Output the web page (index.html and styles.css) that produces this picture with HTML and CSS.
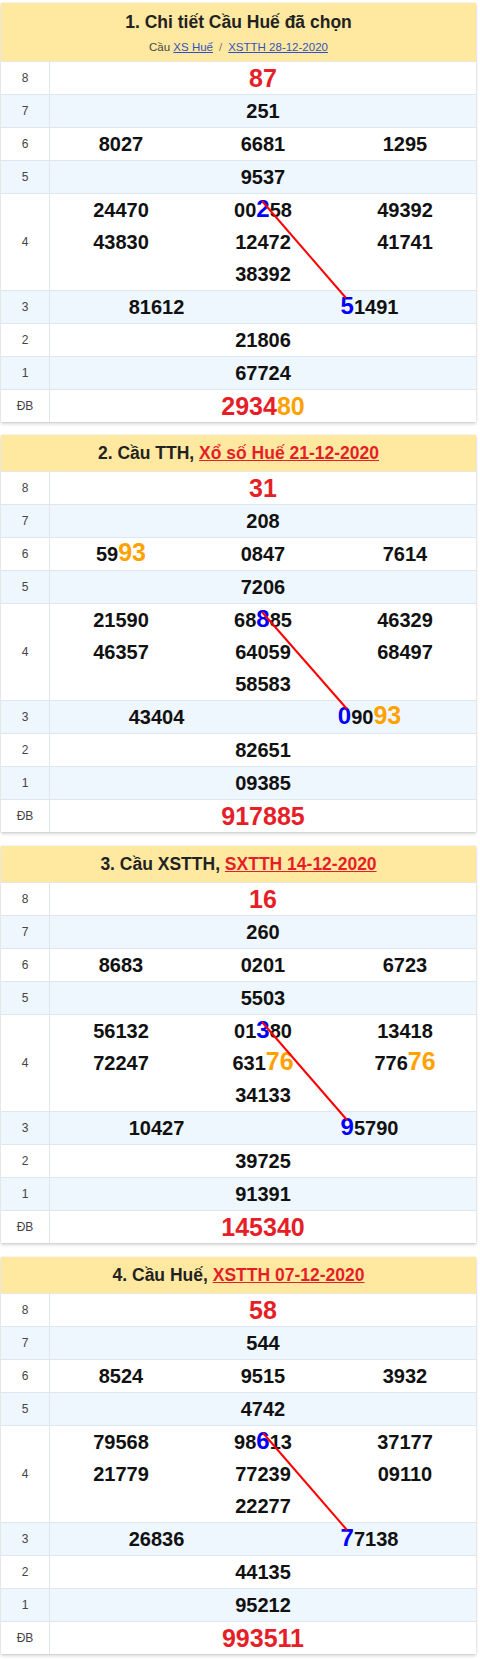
FILE: index.html
```html
<!DOCTYPE html>
<html lang="vi">
<head>
<meta charset="utf-8">
<title>Cầu Huế</title>
<link rel="stylesheet" href="styles.css">
</head>
<body>
<main class="page">

<section class="card">
  <div class="card-head head-two">
    <h2 class="card-title">1. Chi tiết Cầu Huế đã chọn</h2>
    <p class="card-sub">Cầu <a href="#">XS Huế</a><span class="sep">/</span><a href="#">XSTTH 28-12-2020</a></p>
  </div>
  <div class="results">
    <svg class="bridge" width="475" height="360" viewBox="0 0 475 360"><line x1="261" y1="139" x2="345" y2="236"/></svg>
    <div class="row"><div class="lbl">8</div><div class="nums c1"><span class="big red">87</span></div></div>
    <div class="row alt"><div class="lbl">7</div><div class="nums c1"><span>251</span></div></div>
    <div class="row"><div class="lbl">6</div><div class="nums c3"><span>8027</span><span>6681</span><span>1295</span></div></div>
    <div class="row alt"><div class="lbl">5</div><div class="nums c1"><span>9537</span></div></div>
    <div class="row r4"><div class="lbl">4</div><div class="nums c3"><span>24470</span><span>00<b class="hl">2</b>58</span><span>49392</span><span>43830</span><span>12472</span><span>41741</span><span class="mid">38392</span></div></div>
    <div class="row alt"><div class="lbl">3</div><div class="nums c2"><span>81612</span><span><b class="hl">5</b>1491</span></div></div>
    <div class="row"><div class="lbl">2</div><div class="nums c1"><span>21806</span></div></div>
    <div class="row alt"><div class="lbl">1</div><div class="nums c1"><span>67724</span></div></div>
    <div class="row"><div class="lbl">ĐB</div><div class="nums c1"><span class="big red">2934<b class="org">80</b></span></div></div>
  </div>
</section>

<section class="card">
  <div class="card-head">
    <h2 class="card-title">2. Cầu TTH, <a href="#">Xổ số Huế 21-12-2020</a></h2>
  </div>
  <div class="results">
    <svg class="bridge" width="475" height="360" viewBox="0 0 475 360"><line x1="261" y1="140" x2="346" y2="237"/></svg>
    <div class="row"><div class="lbl">8</div><div class="nums c1"><span class="big red">31</span></div></div>
    <div class="row alt"><div class="lbl">7</div><div class="nums c1"><span>208</span></div></div>
    <div class="row"><div class="lbl">6</div><div class="nums c3"><span>59<b class="org">93</b></span><span>0847</span><span>7614</span></div></div>
    <div class="row alt"><div class="lbl">5</div><div class="nums c1"><span>7206</span></div></div>
    <div class="row r4"><div class="lbl">4</div><div class="nums c3"><span>21590</span><span>68<b class="hl">8</b>85</span><span>46329</span><span>46357</span><span>64059</span><span>68497</span><span class="mid">58583</span></div></div>
    <div class="row alt"><div class="lbl">3</div><div class="nums c2"><span>43404</span><span><b class="hl">0</b>90<b class="org">93</b></span></div></div>
    <div class="row"><div class="lbl">2</div><div class="nums c1"><span>82651</span></div></div>
    <div class="row alt"><div class="lbl">1</div><div class="nums c1"><span>09385</span></div></div>
    <div class="row"><div class="lbl">ĐB</div><div class="nums c1"><span class="big red">917885</span></div></div>
  </div>
</section>

<section class="card">
  <div class="card-head">
    <h2 class="card-title">3. Cầu XSTTH, <a href="#">SXTTH 14-12-2020</a></h2>
  </div>
  <div class="results">
    <svg class="bridge" width="475" height="360" viewBox="0 0 475 360"><line x1="261" y1="139" x2="346" y2="237"/></svg>
    <div class="row"><div class="lbl">8</div><div class="nums c1"><span class="big red">16</span></div></div>
    <div class="row alt"><div class="lbl">7</div><div class="nums c1"><span>260</span></div></div>
    <div class="row"><div class="lbl">6</div><div class="nums c3"><span>8683</span><span>0201</span><span>6723</span></div></div>
    <div class="row alt"><div class="lbl">5</div><div class="nums c1"><span>5503</span></div></div>
    <div class="row r4"><div class="lbl">4</div><div class="nums c3"><span>56132</span><span>01<b class="hl">3</b>80</span><span>13418</span><span>72247</span><span>631<b class="org">76</b></span><span>776<b class="org">76</b></span><span class="mid">34133</span></div></div>
    <div class="row alt"><div class="lbl">3</div><div class="nums c2"><span>10427</span><span><b class="hl">9</b>5790</span></div></div>
    <div class="row"><div class="lbl">2</div><div class="nums c1"><span>39725</span></div></div>
    <div class="row alt"><div class="lbl">1</div><div class="nums c1"><span>91391</span></div></div>
    <div class="row"><div class="lbl">ĐB</div><div class="nums c1"><span class="big red">145340</span></div></div>
  </div>
</section>

<section class="card">
  <div class="card-head">
    <h2 class="card-title">4. Cầu Huế, <a href="#">XSTTH 07-12-2020</a></h2>
  </div>
  <div class="results">
    <svg class="bridge" width="475" height="360" viewBox="0 0 475 360"><line x1="262" y1="139" x2="346" y2="236"/></svg>
    <div class="row"><div class="lbl">8</div><div class="nums c1"><span class="big red">58</span></div></div>
    <div class="row alt"><div class="lbl">7</div><div class="nums c1"><span>544</span></div></div>
    <div class="row"><div class="lbl">6</div><div class="nums c3"><span>8524</span><span>9515</span><span>3932</span></div></div>
    <div class="row alt"><div class="lbl">5</div><div class="nums c1"><span>4742</span></div></div>
    <div class="row r4"><div class="lbl">4</div><div class="nums c3"><span>79568</span><span>98<b class="hl">6</b>13</span><span>37177</span><span>21779</span><span>77239</span><span>09110</span><span class="mid">22277</span></div></div>
    <div class="row alt"><div class="lbl">3</div><div class="nums c2"><span>26836</span><span><b class="hl">7</b>7138</span></div></div>
    <div class="row"><div class="lbl">2</div><div class="nums c1"><span>44135</span></div></div>
    <div class="row alt"><div class="lbl">1</div><div class="nums c1"><span>95212</span></div></div>
    <div class="row"><div class="lbl">ĐB</div><div class="nums c1"><span class="big red">993511</span></div></div>
  </div>
</section>

</main>
</body>
</html>
```

FILE: styles.css
```css
* { box-sizing: border-box; }

body {
  margin: 0;
  background: #ffffff;
  font-family: "Liberation Sans", Arial, sans-serif;
  color: #111111;
}

.page {
  padding: 3px 4px 0 1px;
}

.card {
  box-shadow: 0 0 1px rgba(0, 0, 0, 0.22), 0 2px 3px rgba(0, 0, 0, 0.16);
  margin-bottom: 14px;
  background: #ffffff;
}

.card:first-child {
  margin-bottom: 13px;
}

.card-head {
  background: #ffe9a1;
  text-align: center;
  padding: 7px 6px 6px;
  border-bottom: 1px solid #e9e6dc;
}

.head-two {
  padding: 7px 6px 5px;
}

.card-title {
  margin: 0;
  font-size: 17.5px;
  line-height: 23px;
  font-weight: bold;
  color: #222222;
}

.head-two .card-title {
  line-height: 24px;
}

.card-title a {
  color: #e61e28;
  text-decoration: underline;
}

.card-sub {
  margin: 4px 0 0;
  font-size: 11.5px;
  line-height: 18px;
  color: #444444;
}

.card-sub a {
  color: #3450c0;
  text-decoration: underline;
}

.sep {
  color: #777777;
  padding: 0 6px;
}

.results {
  position: relative;
}

.bridge {
  position: absolute;
  left: 0;
  top: 0;
  pointer-events: none;
  overflow: visible;
  z-index: 2;
}

.bridge line {
  stroke: #ff0000;
  stroke-width: 2;
}

.row {
  display: grid;
  grid-template-columns: 49px 1fr;
  border-bottom: 1px solid #dfe6ee;
  background: #ffffff;
}

.row:last-child {
  border-bottom: none;
}

.row.alt {
  background: #eef6fe;
}

.lbl {
  border-right: 1px solid #dfe6ee;
  display: flex;
  align-items: center;
  justify-content: center;
  font-size: 12px;
  color: #444444;
}

.nums {
  display: grid;
  grid-auto-rows: 32px;
  text-align: center;
  font-size: 20px;
  font-weight: bold;
  line-height: 32px;
  color: #111111;
}

.nums b {
  font-weight: bold;
  line-height: 20px;
}

.c1 { grid-template-columns: 1fr; }
.c2 { grid-template-columns: 1fr 1fr; }
.c3 { grid-template-columns: 1fr 1fr 1fr; }

.mid {
  grid-column: 2;
}

.big {
  font-size: 25px;
}

.red {
  color: #e61e28;
}

.org {
  color: #ffa200;
  font-size: 25px;
}

.hl {
  color: #0000ff;
  font-size: 24px;
}
```
